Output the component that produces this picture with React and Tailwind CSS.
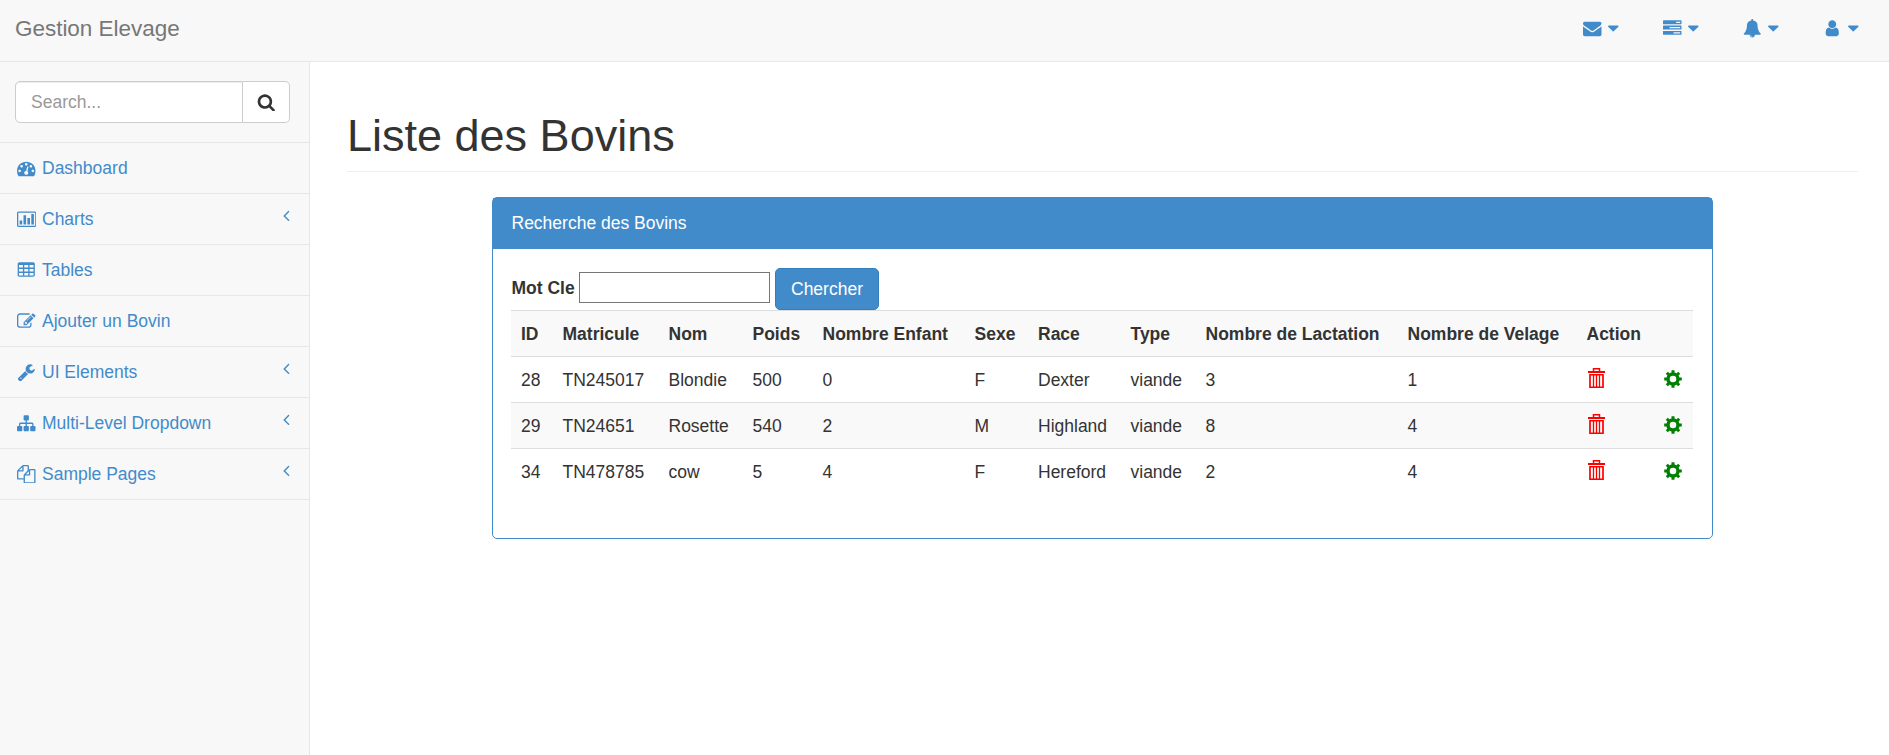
import React from "react";

const ICONS = {
  search: "M1216 832q0-185-131.5-316.5t-316.5-131.5-316.5 131.5-131.5 316.5 131.5 316.5 316.5 131.5 316.5-131.5 131.5-316.5zm512 832q0 52-38 90t-90 38q-54 0-90-38l-343-342q-179 124-399 124-143 0-273.5-55.5t-225-150-150-225-55.5-273.5 55.5-273.5 150-225 225-150 273.5-55.5 273.5 55.5 225 150 150 225 55.5 273.5q0 220-124 399l343 343q37 37 37 90z",
  dashboard: "M384 1152q0-53-37.5-90.5t-90.5-37.5-90.5 37.5-37.5 90.5 37.5 90.5 90.5 37.5 90.5-37.5 37.5-90.5zm192-448q0-53-37.5-90.5t-90.5-37.5-90.5 37.5-37.5 90.5 37.5 90.5 90.5 37.5 90.5-37.5 37.5-90.5zm428 481l101-382q6-26-7.5-48.5t-38.5-29.5-48 6.5-30 39.5l-101 382q-60 5-107 43.5t-63 98.5q-20 77 20 146t117 89 146-20 89-117q16-60-6-117t-72-91zm660-33q0-53-37.5-90.5t-90.5-37.5-90.5 37.5-37.5 90.5 37.5 90.5 90.5 37.5 90.5-37.5 37.5-90.5zm-640-640q0-53-37.5-90.5t-90.5-37.5-90.5 37.5-37.5 90.5 37.5 90.5 90.5 37.5 90.5-37.5 37.5-90.5zm448 192q0-53-37.5-90.5t-90.5-37.5-90.5 37.5-37.5 90.5 37.5 90.5 90.5 37.5 90.5-37.5 37.5-90.5zm320 448q0 261-141 483-19 29-54 29h-1402q-35 0-54-29-141-221-141-483 0-182 71-348t191-286 286-191 348-71 348 71 286 191 191 286 71 348z",
  chart: "M512 1024v384h-256v-384h256zm384-512v896h-256v-896h256zm384 256v640h-256v-640h256zm384-384v1024h-256v-1024h256zm128 1120v-1216q0-13-9.500-22.500t-22.500-9.500h-1600q-13 0-22.500 9.500t-9.500 22.500v1216q0 13 9.500 22.500t22.500 9.500h1600q13 0 22.500-9.500t9.500-22.500zm128-1216v1216q0 66-47 113t-113 47h-1600q-66 0-113-47t-47-113v-1216q0-66 47-113t113-47h1600q66 0 113 47t47 113z",
  table: "M576 1376v-192q0-14-9-23t-23-9h-320q-14 0-23 9t-9 23v192q0 14 9 23t23 9h320q14 0 23-9t9-23zm0-384v-192q0-14-9-23t-23-9h-320q-14 0-23 9t-9 23v192q0 14 9 23t23 9h320q14 0 23-9t9-23zm512 384v-192q0-14-9-23t-23-9h-320q-14 0-23 9t-9 23v192q0 14 9 23t23 9h320q14 0 23-9t9-23zm-512-768v-192q0-14-9-23t-23-9h-320q-14 0-23 9t-9 23v192q0 14 9 23t23 9h320q14 0 23-9t9-23zm512 384v-192q0-14-9-23t-23-9h-320q-14 0-23 9t-9 23v192q0 14 9 23t23 9h320q14 0 23-9t9-23zm512 384v-192q0-14-9-23t-23-9h-320q-14 0-23 9t-9 23v192q0 14 9 23t23 9h320q14 0 23-9t9-23zm-512-768v-192q0-14-9-23t-23-9h-320q-14 0-23 9t-9 23v192q0 14 9 23t23 9h320q14 0 23-9t9-23zm512 384v-192q0-14-9-23t-23-9h-320q-14 0-23 9t-9 23v192q0 14 9 23t23 9h320q14 0 23-9t9-23zm0-384v-192q0-14-9-23t-23-9h-320q-14 0-23 9t-9 23v192q0 14 9 23t23 9h320q14 0 23-9t9-23zm128-320v1088q0 66-47 113t-113 47h-1344q-66 0-113-47t-47-113v-1088q0-66 47-113t113-47h1344q66 0 113 47t47 113z",
  edit: "M888 1184l116-116-152-152-116 116v56h96v96h56zm440-720q-16-16-33 1l-350 350q-17 17-1 33t33-1l350-350q17-17 1-33zm80 594v190q0 119-84.5 203.5t-203.5 84.5h-832q-119 0-203.5-84.5t-84.5-203.5v-832q0-119 84.5-203.5t203.5-84.5h832q63 0 117 25 15 7 18 23 3 17-9 29l-49 49q-14 14-32 8-23-6-45-6h-832q-66 0-113 47t-47 113v832q0 66 47 113t113 47h832q66 0 113-47t47-113v-126q0-13 9-22l64-64q15-15 35-7t20 29zm-96-738l288 288-672 672h-288v-288zm444 132l-92 92-288-288 92-92q28-28 68-28t68 28l152 152q28 28 28 68t-28 68z",
  wrench: "M448 1472q0-26-19-45t-45-19-45 19-19 45 19 45 45 19 45-19 19-45zm644-420l-682 682q-37 37-90 37-52 0-91-37l-106-108q-38-36-38-90 0-53 38-91l681-681q39 98 114.5 173.5t173.5 114.5zm634-435q0 39-23 106-47 134-164.5 217.5t-258.5 83.5q-185 0-316.5-131.5t-131.5-316.5 131.5-316.5 316.5-131.5q58 0 121.5 16.5t107.5 46.5q16 11 16 28t-16 28l-293 169v224l193 107q5-3 79-48.5t135.5-81 70.5-35.5q15 0 23.5 10t8.5 25z",
  sitemap: "M1792 1248v320q0 40-28 68t-68 28h-320q-40 0-68-28t-28-68v-320q0-40 28-68t68-28h96v-192h-512v192h96q40 0 68 28t28 68v320q0 40-28 68t-68 28h-320q-40 0-68-28t-28-68v-320q0-40 28-68t68-28h96v-192h-512v192h96q40 0 68 28t28 68v320q0 40-28 68t-68 28h-320q-40 0-68-28t-28-68v-320q0-40 28-68t68-28h96v-192q0-52 38-90t90-38h512v-192h-96q-40 0-68-28t-28-68v-320q0-40 28-68t68-28h320q40 0 68 28t28 68v320q0 40-28 68t-68 28h-96v192h512q52 0 90 38t38 90v192h96q40 0 68 28t28 68z",
  files: "M1696 384q40 0 68 28t28 68v1216q0 40-28 68t-68 28h-960q-40 0-68-28t-28-68v-288h-544q-40 0-68-28t-28-68v-672q0-40 20-88t48-76l408-408q28-28 76-48t88-20h416q40 0 68 28t28 68v328q68-40 128-40h416zm-544 213l-299 299h299v-299zm-640-384l-299 299h299v-299zm196 647l316-316v-416h-384v416q0 40-28 68t-68 28h-416v640h512v-256q0-40 20-88t48-76zm956 804v-1152h-384v416q0 40-28 68t-68 28h-416v640h896z",
  envelope: "M1792 710v794q0 66-47 113t-113 47h-1472q-66 0-113-47t-47-113v-794q44 49 101 87 362 246 497 345 57 42 92.5 65.5t94.5 48 110 24.5h2q51 0 110-24.5t94.5-48 92.5-65.5q170-123 498-345 57-39 100-87zm0-294q0 79-49 151t-122 123q-376 261-468 325-10 7-42.5 31t-54 38.5-52 32.5-57.5 27-50 9h-2q-23 0-50-9t-57.5-27-52-32.5-54-38.5-42.5-31q-91-64-262-182.5t-205-142.5q-62-42-117-115.5t-55-136.5q0-78 41.5-130t118.5-52h1472q65 0 112.5 47t47.5 113z",
  tasks: "M1024 1408h640v-128h-640v128zm-384-512h1024v-128h-1024v128zm640-512h384v-128h-384v128zm512 832v256q0 26-19 45t-45 19h-1664q-26 0-45-19t-19-45v-256q0-26 19-45t45-19h1664q26 0 45 19t19 45zm0-512v256q0 26-19 45t-45 19h-1664q-26 0-45-19t-19-45v-256q0-26 19-45t45-19h1664q26 0 45 19t19 45zm0-512v256q0 26-19 45t-45 19h-1664q-26 0-45-19t-19-45v-256q0-26 19-45t45-19h1664q26 0 45 19t19 45z",
  bell: "M912 1696q0-16-16-16-59 0-101.5-42.5t-42.5-101.5q0-16-16-16t-16 16q0 73 51.5 124.5t124.5 51.5q16 0 16-16zm816-288q0 52-38 90t-90 38h-448q0 106-75 181t-181 75-181-75-75-181h-448q-52 0-90-38t-38-90q50-42 91-88t85-119.5 74.5-158.5 50-206 19.5-260q0-152 117-282.5t307-158.5q-8-19-8-39 0-40 28-68t68-28 68 28 28 68q0 20-8 39 190 28 307 158.5t117 282.5q0 139 19.5 260t50 206 74.5 158.5 85 119.5 91 88z",
  user: "M1536 1399q0 109-62.5 187t-150.5 78h-854q-88 0-150.5-78t-62.5-187q0-85 8.5-160.5t31.5-152 58.5-131 94-89 134.5-34.5q131 128 313 128t313-128q76 0 134.5 34.5t94 89 58.5 131 31.5 152 8.5 160.5zm-256-887q0 159-112.5 271.5t-271.5 112.5-271.5-112.5-112.5-271.5 112.5-271.5 271.5-112.5 271.5 112.5 112.5 271.5z",
  caret: "M1408 704q0 26-19 45l-448 448q-19 19-45 19t-45-19l-448-448q-19-19-19-45t19-45 45-19h896q26 0 45 19t19 45z",
  angle: "M1203 544q0 13-10 23l-393 393 393 393q10 10 10 23t-10 23l-50 50q-10 10-23 10t-23-10l-466-466q-10-10-10-23t10-23l466-466q10-10 23-10t23 10l50 50q10 10 10 23z",
};

function Icon({ name, wide = false, className = "" }) {
  return (
    <svg
      viewBox={wide ? "0 0 1920 1792" : "0 0 1792 1792"}
      className={`h-[18.5px] shrink-0 fill-current ${wide ? "w-[19.5px]" : "w-[18.5px]"} ${className}`}
      aria-hidden="true"
    >
      <path d={ICONS[name]} />
    </svg>
  );
}

const MENU = [
  { icon: "dashboard", label: "Dashboard" },
  { icon: "chart", label: "Charts", more: true, wide: true },
  { icon: "table", label: "Tables" },
  { icon: "edit", label: "Ajouter un Bovin" },
  { icon: "wrench", label: "UI Elements", more: true },
  { icon: "sitemap", label: "Multi-Level Dropdown", more: true },
  { icon: "files", label: "Sample Pages", more: true },
];

const HEADERS = ["ID", "Matricule", "Nom", "Poids", "Nombre Enfant", "Sexe", "Race", "Type", "Nombre de Lactation", "Nombre de Velage", "Action", ""];

const ROWS = [
  ["28", "TN245017", "Blondie", "500", "0", "F", "Dexter", "viande", "3", "1"],
  ["29", "TN24651", "Rosette", "540", "2", "M", "Highland", "viande", "8", "4"],
  ["34", "TN478785", "cow", "5", "4", "F", "Hereford", "viande", "2", "4"],
];

function Trash() {
  return (
    <svg viewBox="0 0 17 20" className="h-5 w-[17px] text-[#ff0000]" fill="none" stroke="currentColor" aria-hidden="true">
      <path d="M5.500 3.500v-2.700h6v2.700" strokeWidth="1.500" />
      <path d="M0 4h17" strokeWidth="2" />
      <path d="M2 6.750v12.500h13V6.750z" strokeWidth="1.700" />
      <path d="M5.500 6v13M8.500 6v13M11.500 6v13" strokeWidth="1.300" />
    </svg>
  );
}

function Cog() {
  return (
    <svg viewBox="-9 -9 18 18" className="h-[18px] w-[18px] text-[#008000]" fill="none" stroke="currentColor" aria-hidden="true">
      <circle r="5" strokeWidth="3.400" />
      <path d="M0-8.800v3M0 8.800v-3M-8.800 0h3M8.800 0h-3M-6.200-6.200l2 2M6.200-6.200l-2 2M-6.200 6.200l2-2M6.200 6.200l-2-2" strokeWidth="3" />
    </svg>
  );
}

export default function App() {
  return (
    <div className="flex h-[755px] w-[1889px] flex-col overflow-hidden bg-white font-['Liberation_Sans',Arial,sans-serif] text-[17.5px] leading-[25px] text-[#333333]">
      <header className="flex h-[62px] shrink-0 items-start justify-between border-b border-[#e7e7e7] bg-[#f8f8f8] pr-[27px] pl-[15px]">
        <a className="pt-4 text-[22.5px] tracking-[-0.03px] text-[#777777]">Gestion Elevage</a>
        <nav className="flex pt-[19px] text-[#428bca]">
          {["envelope", "tasks", "bell", "user"].map((n) => (
            <a key={n} className="flex w-20 justify-end">
              <Icon name={n} />
              <Icon name="caret" className="ml-[2px]" />
            </a>
          ))}
        </nav>
      </header>
      <div className="flex min-h-0 flex-1">
        <aside className="w-[310px] shrink-0 border-r border-[#e7e7e7] bg-[#f8f8f8]">
          <div className="flex h-[81px] items-start border-b border-[#e7e7e7] pt-[19px] pl-[15px]">
            <div className="flex h-[42px] w-[228px] items-center rounded-l-[5px] border border-[#cccccc] bg-white pl-[15px] text-[#999999] shadow-[inset_0_1px_1px_rgba(0,0,0,0.075)]">Search...</div>
            <button className="flex h-[42px] w-[47px] items-center justify-center rounded-r-[5px] border border-l-0 border-[#cccccc] bg-white">
              <Icon name="search" />
            </button>
          </div>
          <ul>
            {MENU.map((m) => (
              <li key={m.label} className="flex h-[51px] items-center border-b border-[#e7e7e7] pr-[13.5px] pl-[15px] text-[#428bca]">
                <span className="mr-[4.5px] flex w-[22.5px] justify-center">
                  <Icon name={m.icon} wide={m.wide} />
                </span>
                <span className="flex-1">{m.label}</span>
                {m.more && <Icon name="angle" className="mb-2" />}
              </li>
            ))}
          </ul>
        </aside>
        <main className="flex-1 pr-[31px] pl-[37px]">
          <h1 className="h-[110px] border-b border-[#eeeeee] pt-[49px] text-[45px] leading-[50px]">Liste des Bovins</h1>
          <section className="mt-[25px] ml-[145px] h-[342px] w-[1221px] rounded-[5px] border border-[#428bca]">
            <h2 className="flex h-[51px] items-center bg-[#428bca] pl-[18.5px] text-white">Recherche des Bovins</h2>
            <div className="px-[18px] pt-[19px]">
              <div className="flex h-[42px] items-start">
                <label className="mt-2 ml-[0.5px] w-[67.5px] font-bold">Mot Cle</label>
                <input className="mt-1 h-[31px] w-[191px] border border-[#767676] bg-white" />
                <button className="ml-[5px] h-[42px] w-[104px] rounded-[5px] border border-[#357ebd] bg-[#428bca] text-white">Chercher</button>
              </div>
              <table className="w-[1182px] table-fixed border-collapse">
                <colgroup>
                  <col className="w-[41.500px]" />
                  <col className="w-[106px]" />
                  <col className="w-[84px]" />
                  <col className="w-[70px]" />
                  <col className="w-[152px]" />
                  <col className="w-[63.500px]" />
                  <col className="w-[92.500px]" />
                  <col className="w-[75px]" />
                  <col className="w-[202px]" />
                  <col className="w-[179px]" />
                  <col className="w-[77px]" />
                  <col />
                </colgroup>
                <thead>
                  <tr className="h-[46px] border-t border-[#dddddd] bg-[#f9f9f9] text-left">
                    {HEADERS.map((h, i) => (
                      <th key={i} className="pt-[2px] pl-[10px] font-bold whitespace-nowrap">{h}</th>
                    ))}
                  </tr>
                </thead>
                <tbody>
                  {ROWS.map((r) => (
                    <tr key={r[0]} className="h-[46px] border-t border-[#dddddd] even:bg-[#f9f9f9]">
                      {r.map((c, i) => (
                        <td key={i} className="pt-[2px] pl-[10px]">{c}</td>
                      ))}
                      <td className="pb-1 pl-[11px]"><Trash /></td>
                      <td className="pb-[2px] pl-[10px]"><Cog /></td>
                    </tr>
                  ))}
                </tbody>
              </table>
            </div>
          </section>
        </main>
      </div>
    </div>
  );
}
